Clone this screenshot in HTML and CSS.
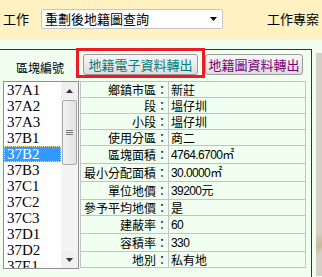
FILE: index.html
```html
<!DOCTYPE html>
<html lang="zh-Hant">
<head>
    <meta charset="utf-8">
    <meta name="viewport" content="width=device-width, initial-scale=1.0">
    <title>重劃後地籍圖查詢</title>
    <link rel="stylesheet" href="styles.css">
</head>
<body>
    <div class="topbar">
        <span class="label">工作</span>
        <div class="picker">
            <span>重劃後地籍圖查詢</span>
            <svg class="caret" width="7" height="4" viewBox="0 0 7 4"><path d="M0 0H7L3.5 4Z" fill="#000"/></svg>
        </div>
        <span class="project">工作專案</span>
    </div>

    <div class="main">
        <div class="frame">
            <div class="side">
                <div class="side-title">區塊編號</div>
                <div class="listbox">
                    <ul class="items">
                        <li>37A1</li>
                        <li>37A2</li>
                        <li>37A3</li>
                        <li>37B1</li>
                        <li class="selected">37B2</li>
                        <li>37B3</li>
                        <li>37C1</li>
                        <li>37C2</li>
                        <li>37C3</li>
                        <li>37D1</li>
                        <li>37D2</li>
                        <li>37E1</li>
                    </ul>
                    <div class="scrollbar">
                        <div class="sb-btn">
                            <svg width="7" height="4" viewBox="0 0 7 4"><path d="M0 4H7L3.5 0Z" fill="#333"/></svg>
                        </div>
                        <div class="sb-track">
                            <div class="sb-thumb"><span></span><span></span><span></span></div>
                        </div>
                        <div class="sb-btn">
                            <svg width="7" height="4" viewBox="0 0 7 4"><path d="M0 0H7L3.5 4Z" fill="#333"/></svg>
                        </div>
                    </div>
                </div>
            </div>

            <div class="content">
                <div class="actions">
                    <button class="btn btn-teal marked">地籍電子資料轉出</button>
                    <button class="btn btn-purple">地籍圖資料轉出</button>
                </div>
                <table class="info">
                    <colgroup><col class="key-col"><col></colgroup>
                    <tr><td class="key">鄉鎮市區：</td><td>新莊</td></tr>
                    <tr><td class="key">段：</td><td>塭仔圳</td></tr>
                    <tr><td class="key">小段：</td><td>塭仔圳</td></tr>
                    <tr><td class="key">使用分區：</td><td>商二</td></tr>
                    <tr><td class="key">區塊面積：</td><td><span class="num">4764.6700</span>㎡</td></tr>
                    <tr><td class="key">最小分配面積：</td><td><span class="num">30.0000</span>㎡</td></tr>
                    <tr><td class="key">單位地價：</td><td><span class="num">39200</span>元</td></tr>
                    <tr><td class="key">參予平均地價：</td><td>是</td></tr>
                    <tr><td class="key">建蔽率：</td><td><span class="num">60</span></td></tr>
                    <tr><td class="key">容積率：</td><td><span class="num">330</span></td></tr>
                    <tr><td class="key">地別：</td><td>私有地</td></tr>
                </table>
            </div>
        </div>
        <div class="edge"></div>
    </div>
</body>
</html>
```

FILE: styles.css
```css
* {
    box-sizing: border-box;
}

body {
    margin: 0;
    width: 322px;
    height: 277px;
    overflow: hidden;
    font-family: "Noto Sans CJK TC", "Liberation Sans", sans-serif;
    color: #000;
    background-color: #f0fff0;
}

.topbar {
    height: 40px;
    padding-top: 9px;
    display: flex;
    align-items: flex-start;
    font-size: 13px;
    line-height: 20px;
    background-color: #fff1c2;
}

.topbar .label {
    width: 38px;
    margin-left: 3px;
}

.picker {
    width: 182px;
    height: 20px;
    padding-left: 3px;
    padding-right: 5px;
    display: flex;
    align-items: center;
    justify-content: space-between;
    background-color: #fff;
    border: 1px solid #c6c6c6;
    border-radius: 2px;
}

.project {
    margin-left: auto;
    margin-right: 3px;
}

.main {
    padding-top: 9px;
    display: flex;
}

.frame {
    width: 312px;
    height: 228px;
    flex-shrink: 0;
    display: grid;
    grid-template-columns: 80px 1fr;
    align-items: start;
    border-top: 1px solid #800080;
    border-right: 1px solid #800080;
}

.edge {
    width: 6px;
    height: 223px;
    flex-shrink: 0;
    margin-top: 4px;
    margin-left: 4px;
    background: linear-gradient(160deg, #d4d0c8 80%, #c9b99a 86%, #d4d0c8 90%);
}

/* left column */
.side-title {
    height: 31px;
    padding-top: 10px;
    font-size: 12px;
    line-height: 16px;
    text-align: center;
}

.listbox {
    width: 76px;
    height: 188px;
    margin-left: 3px;
    display: flex;
    overflow: hidden;
    background-color: #fff;
    border: 1px solid #8e8f8f;
}

.items {
    flex: 1;
    margin: 0;
    padding: 0;
    list-style: none;
    overflow: hidden;
    font-family: "Liberation Serif", serif;
    font-size: 15px;
}

.items li {
    height: 16px;
    line-height: 16px;
    padding-left: 3px;
    white-space: nowrap;
}

.items li.selected {
    color: #fff;
    background-color: #3399ff;
    outline: 1px dotted #f4e3a6;
    outline-offset: -1px;
}

.scrollbar {
    width: 17px;
    display: flex;
    flex-direction: column;
    background-color: #f0f0f0;
}

.sb-btn {
    height: 17px;
    display: flex;
    align-items: center;
    justify-content: center;
    background-color: #f0f0f0;
}

.sb-track {
    flex: 1;
    padding: 1px 0 0;
    background-color: #f4f4f4;
}

.sb-thumb {
    height: 65px;
    margin: 0 1px;
    display: flex;
    flex-direction: column;
    align-items: center;
    justify-content: center;
    gap: 1px;
    border: 1px solid #a8a8a8;
    border-radius: 2px;
    background: linear-gradient(90deg, #f2f2f2, #e2e2e2);
}

.sb-thumb span {
    width: 7px;
    height: 1px;
    background-color: #777;
}

/* right column */
.actions {
    height: 31px;
    padding-top: 4px;
    padding-left: 3px;
    display: flex;
    gap: 7px;
}

.btn {
    height: 21px;
    padding: 0;
    font-family: "Noto Sans CJK TC", sans-serif;
    font-size: 13px;
    line-height: 19px;
    border: 1px solid #9a9a9a;
    border-radius: 3px;
    background: linear-gradient(#f7f7f7, #dedede);
}

.btn-teal {
    width: 115px;
    color: #008080;
}

.btn-purple {
    width: 98px;
    color: #800080;
}

.marked {
    position: relative;
}

.marked::after {
    content: "";
    position: absolute;
    top: -7px;
    left: -8px;
    right: -8px;
    bottom: -4px;
    border: 3px solid #ed1c24;
}

.info {
    width: 226px;
    table-layout: fixed;
    border-collapse: collapse;
    font-size: 12px;
}

.key-col {
    width: 88px;
}

.info td {
    height: 16px;
    padding: 0 0 0 2px;
    line-height: 15px;
    white-space: nowrap;
    border: 1px solid #c3c3c3;
}

.info td.key {
    padding: 0;
    text-align: right;
}

.num {
    font-family: "Liberation Sans", sans-serif;
    letter-spacing: -0.6px;
}
```
